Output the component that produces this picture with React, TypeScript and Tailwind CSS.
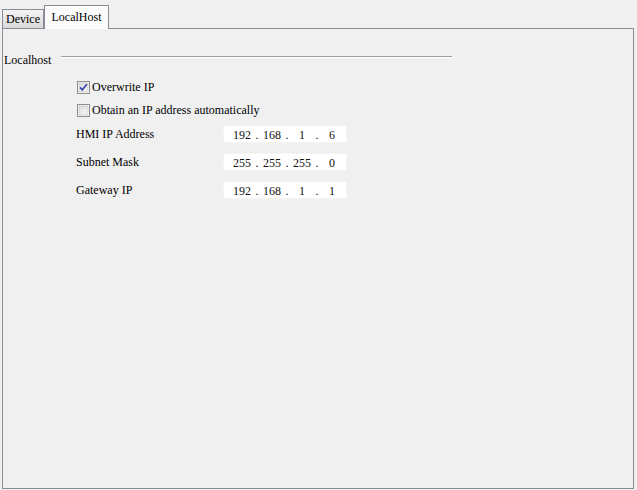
import React from 'react';

const font = { fontFamily: '"Liberation Serif", "Times New Roman", serif' };

function CheckBox({ checked }: { checked?: boolean }) {
  return (
    <svg width="13" height="13" viewBox="0 0 13 13" className="shrink-0">
      <defs>
        <linearGradient id="cbg" x1="0" y1="0" x2="1" y2="1">
          <stop offset="0" stopColor="#dcdcdc" />
          <stop offset="1" stopColor="#f8f8f8" />
        </linearGradient>
      </defs>
      <rect x="0.5" y="0.5" width="12" height="12" fill="#fff" stroke="#8e8f8f" />
      <rect x="2" y="2" width="9" height="9" fill="url(#cbg)" stroke="#b8b8b8" strokeWidth="0.6" />
      {checked && (
        <path d="M3.2 6.4 L5.3 9 L9.8 3.3" fill="none" stroke="#2f46a8" strokeWidth="1.7" />
      )}
    </svg>
  );
}

function IpBox({ parts }: { parts: string[] }) {
  return (
    <div className="w-[124px] h-[18px] bg-white border border-[#f4f4f4] pl-[5px] grid grid-cols-[26px_4px_26px_4px_26px_4px_26px] items-center text-[12px] leading-[18px] text-[#111]">
      <span className="text-center">{parts[0]}</span>
      <span className="text-center">.</span>
      <span className="text-center">{parts[1]}</span>
      <span className="text-center">.</span>
      <span className="text-center">{parts[2]}</span>
      <span className="text-center">.</span>
      <span className="text-center">{parts[3]}</span>
    </div>
  );
}

function IpRow({ label, parts }: { label: string; parts: string[] }) {
  return (
    <div className="flex items-center h-[18px]">
      <span className="w-[147px]">{label}</span>
      <IpBox parts={parts} />
    </div>
  );
}

export default function App() {
  return (
    <div className="w-[637px] h-[490px] bg-[#f0f0f0] text-[12px] text-black overflow-hidden" style={font}>
      {/* tab strip */}
      <div className="flex items-end h-[28px] pl-[2px]">
        <div className="h-[19px] w-[42px] border border-b-0 border-[#898c95] bg-gradient-to-b from-[#f3f3f3] to-[#d9d9d9] flex items-center justify-center leading-none">
          Device
        </div>
        <div className="relative z-10 -mb-px h-[24px] w-[65px] border border-b-0 border-[#898c95] bg-[#fcfcfc] flex items-start justify-center pt-[4px] leading-[14px]">
          LocalHost
        </div>
      </div>

      {/* panel */}
      <div className="ml-[2px] w-[632px] h-[461px] border border-[#898c95] bg-[#f0f0f0] pl-[1px] pt-[23px]">
        <div className="flex items-center h-[16px] leading-[16px]">
          <span>Localhost</span>
          <div className="ml-[10px] w-[391px] h-[2px] border-t border-[#a0a0a0] border-b border-b-white mt-[-6px]" />
        </div>

        <div className="pl-[72px] mt-[11px] flex flex-col">
          <label className="flex items-center h-[16px] gap-[2px] pl-[1px]">
            <CheckBox checked />
            <span>Overwrite IP</span>
          </label>
          <label className="flex items-center h-[16px] gap-[2px] pl-[1px] mt-[7px]">
            <CheckBox />
            <span>Obtain an IP address automatically</span>
          </label>

          <div className="mt-[7px] flex flex-col gap-[10px]">
            <IpRow label="HMI IP Address" parts={['192', '168', '1', '6']} />
            <IpRow label="Subnet Mask" parts={['255', '255', '255', '0']} />
            <IpRow label="Gateway IP" parts={['192', '168', '1', '1']} />
          </div>
        </div>
      </div>
    </div>
  );
}
